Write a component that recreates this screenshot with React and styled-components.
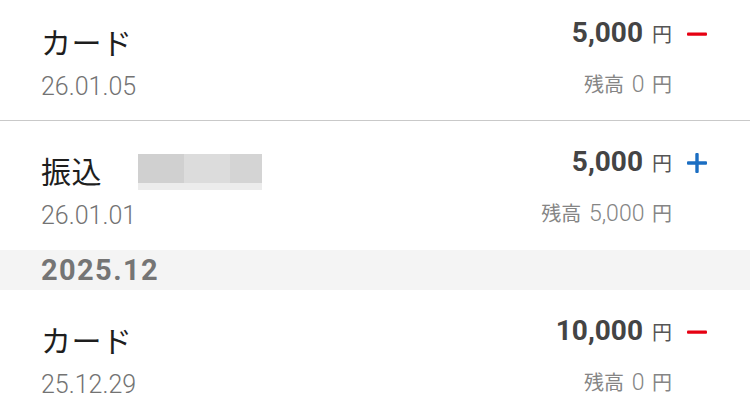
import React from "react";
import styled, { createGlobalStyle } from "styled-components";

const GlobalStyle = createGlobalStyle`
  html, body {
    margin: 0;
    padding: 0;
    background: #ffffff;
  }

  body {
    font-family: "Roboto", "Noto Sans CJK JP", sans-serif;
    overflow: hidden;
  }
`;

const List = styled.div`
  margin-top: -8px;
  width: 750px;
`;

const Row = styled.div`
  box-sizing: border-box;
  height: 129px;
  display: flex;
  justify-content: space-between;
  padding: 0 43px 0 41px;
  border-bottom: ${(props) => (props.$divider ? "1px solid #c9c9c9" : "none")};
`;

const Info = styled.div`
  padding-top: 29px;
  display: flex;
  flex-direction: column;
`;

const TitleLine = styled.div`
  display: flex;
  align-items: flex-start;
  gap: 36px;
`;

const Title = styled.div`
  font-family: "Noto Sans CJK JP", sans-serif;
  font-size: 30px;
  line-height: 40px;
  color: #1e1e1e;
  letter-spacing: 0.5px;
`;

// blurred-out payee name next to the title
const Masked = styled.div`
  display: flex;
  flex-direction: column;
  margin-top: 4px;
`;

const MaskedTop = styled.div`
  display: flex;
  height: 29px;
`;

const MaskedCell = styled.div`
  width: ${(props) => props.$w}px;
  background: ${(props) => props.$c};
`;

const MaskedBottom = styled.div`
  height: 7px;
  background: #ececec;
`;

const DateText = styled.div`
  margin-top: 11px;
  font-size: 25px;
  font-weight: 300;
  line-height: 30px;
  color: #737373;
`;

const Figures = styled.div`
  padding-top: 23px;
  display: flex;
  flex-direction: column;
  align-items: flex-end;
`;

const AmountLine = styled.div`
  display: flex;
  align-items: baseline;
  height: 36px;
  line-height: 36px;
`;

const Amount = styled.span`
  font-size: 28px;
  font-weight: 700;
  color: #444444;
`;

const Yen = styled.span`
  font-family: "Noto Sans CJK JP", sans-serif;
  font-size: 20px;
  color: #555555;
  margin-left: 9px;
`;

const Sign = styled.svg`
  align-self: center;
  width: 20px;
  height: 20px;
  margin-left: 15px;
  margin-top: 1px;
`;

const Balance = styled.div`
  margin-top: 19px;
  margin-right: 35px;
  font-size: 23px;
  font-weight: 300;
  line-height: 28px;
  color: #858585;
  white-space: pre;
  word-spacing: 2px;
`;

const BalanceLabel = styled.span`
  font-family: "Noto Sans CJK JP", sans-serif;
  font-size: 20px;
  font-weight: 400;
`;

const MonthHeader = styled.div`
  height: 40px;
  background: #f4f4f4;
  padding-left: 41px;
  font-size: 29px;
  font-weight: 700;
  letter-spacing: 1.4px;
  line-height: 40px;
  color: #757575;
`;

const SignIcon = ({ type }) => {
  if (type === "plus") {
    return (
      <Sign viewBox="0 0 20 20">
        <rect x="0" y="8.3" width="20" height="3.4" rx="1" fill="#1b6ec2" />
        <rect x="8.3" y="0" width="3.4" height="20" rx="1" fill="#1b6ec2" />
      </Sign>
    );
  }
  return (
    <Sign viewBox="0 0 20 20">
      <rect x="0" y="8.6" width="20" height="3.2" rx="1" fill="#e60012" />
    </Sign>
  );
};

const entries = [
  {
    id: 1,
    title: "カード",
    date: "26.01.05",
    amount: "5,000",
    sign: "minus",
    balance: "0",
    divider: true,
  },
  {
    id: 2,
    title: "振込",
    masked: true,
    date: "26.01.01",
    amount: "5,000",
    sign: "plus",
    balance: "5,000",
  },
];

const december = [
  {
    id: 3,
    title: "カード",
    date: "25.12.29",
    amount: "10,000",
    sign: "minus",
    balance: "0",
  },
];

const EntryRow = ({ item }) => (
  <Row $divider={item.divider}>
    <Info>
      <TitleLine>
        <Title>{item.title}</Title>
        {item.masked && (
          <Masked>
            <MaskedTop>
              <MaskedCell $w={46} $c="#d0d0d0" />
              <MaskedCell $w={46} $c="#dcdcdc" />
              <MaskedCell $w={32} $c="#d4d4d4" />
            </MaskedTop>
            <MaskedBottom />
          </Masked>
        )}
      </TitleLine>
      <DateText>{item.date}</DateText>
    </Info>
    <Figures>
      <AmountLine>
        <Amount>{item.amount}</Amount>
        <Yen>円</Yen>
        <SignIcon type={item.sign} />
      </AmountLine>
      <Balance>
        <BalanceLabel>残高</BalanceLabel>
        {` ${item.balance} `}
        <BalanceLabel>円</BalanceLabel>
      </Balance>
    </Figures>
  </Row>
);

const App = () => {
  return (
    <>
      <GlobalStyle />
      <List>
        {entries.map((item) => (
          <EntryRow key={item.id} item={item} />
        ))}
        <MonthHeader>2025.12</MonthHeader>
        {december.map((item) => (
          <EntryRow key={item.id} item={item} />
        ))}
      </List>
    </>
  );
};

export default App;
